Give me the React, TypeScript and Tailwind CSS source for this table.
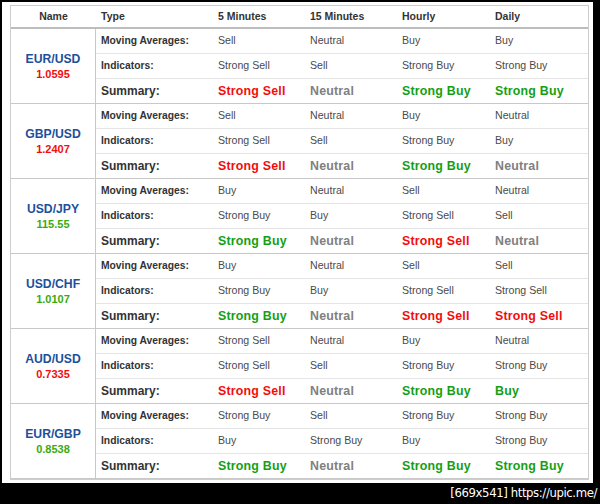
import React from 'react';

type Pair = {
  name: string;
  price: string;
  up: boolean;
  ma: string[];
  ind: string[];
  sum: string[];
};

const pairs: Pair[] = [
  {
    name: 'EUR/USD', price: '1.0595', up: false,
    ma: ['Sell', 'Neutral', 'Buy', 'Buy'],
    ind: ['Strong Sell', 'Sell', 'Strong Buy', 'Strong Buy'],
    sum: ['Strong Sell', 'Neutral', 'Strong Buy', 'Strong Buy'],
  },
  {
    name: 'GBP/USD', price: '1.2407', up: false,
    ma: ['Sell', 'Neutral', 'Buy', 'Neutral'],
    ind: ['Strong Sell', 'Sell', 'Strong Buy', 'Buy'],
    sum: ['Strong Sell', 'Neutral', 'Strong Buy', 'Neutral'],
  },
  {
    name: 'USD/JPY', price: '115.55', up: true,
    ma: ['Buy', 'Neutral', 'Sell', 'Neutral'],
    ind: ['Strong Buy', 'Buy', 'Strong Sell', 'Sell'],
    sum: ['Strong Buy', 'Neutral', 'Strong Sell', 'Neutral'],
  },
  {
    name: 'USD/CHF', price: '1.0107', up: true,
    ma: ['Buy', 'Neutral', 'Sell', 'Sell'],
    ind: ['Strong Buy', 'Buy', 'Strong Sell', 'Strong Sell'],
    sum: ['Strong Buy', 'Neutral', 'Strong Sell', 'Strong Sell'],
  },
  {
    name: 'AUD/USD', price: '0.7335', up: false,
    ma: ['Strong Sell', 'Neutral', 'Buy', 'Neutral'],
    ind: ['Strong Sell', 'Sell', 'Strong Buy', 'Strong Buy'],
    sum: ['Strong Sell', 'Neutral', 'Strong Buy', 'Buy'],
  },
  {
    name: 'EUR/GBP', price: '0.8538', up: true,
    ma: ['Strong Buy', 'Sell', 'Strong Buy', 'Strong Buy'],
    ind: ['Buy', 'Strong Buy', 'Buy', 'Strong Buy'],
    sum: ['Strong Buy', 'Neutral', 'Strong Buy', 'Strong Buy'],
  },
];

// column widths for the four timeframes
const colW = ['w-[92px]', 'w-[92px]', 'w-[93px]', 'flex-1'];

const sumColor = (v: string) => {
  if (v.includes('Sell')) return 'text-[#f20d0d]';
  if (v.includes('Buy')) return 'text-[#14a014]';
  return 'text-[#808080]';
};

const Row = ({ label, values, summary }: { label: string; values: string[]; summary?: boolean }) => (
  <div className={`flex items-center ${summary ? 'h-[24px]' : 'h-[25px] border-b border-[#e4e4e4]'}`}>
    <div className={`w-[117px] pl-[5px] font-bold text-[#333] ${summary ? 'text-[12px]' : 'text-[10.3px]'}`}>{label}</div>
    {values.map((v, i) => (
      <div
        key={i}
        className={`${colW[i]} pl-[5px] ${summary ? `text-[12.4px] font-bold tracking-[0.2px] ${sumColor(v)}` : 'text-[10.6px] text-[#4a4a4a]'}`}
      >
        {v}
      </div>
    ))}
  </div>
);

export default function App() {
  return (
    <div className="w-[600px] h-[504px] bg-black relative overflow-hidden" style={{ fontFamily: '"Liberation Sans", Arial, sans-serif' }}>
      <div className="ml-[2px] mt-[2px] w-[591px] h-[481px] bg-white pl-[8px] pt-[3px]">
        <div className="w-[579px] border border-[#cdcdcd]">
          {/* Header */}
          <div className="flex items-center h-[23px] border-b-2 border-[#bdbdbd] text-[10.5px] font-bold text-[#333]">
            <div className="w-[85px] text-center">Name</div>
            <div className="w-[117px] pl-[5px]">Type</div>
            <div className="w-[92px] pl-[5px]">5 Minutes</div>
            <div className="w-[92px] pl-[5px]">15 Minutes</div>
            <div className="w-[93px] pl-[5px]">Hourly</div>
            <div className="flex-1 pl-[5px]">Daily</div>
          </div>

          {pairs.map((p) => (
            <div key={p.name} className="flex border-b border-[#c9c9c9]">
              <div className="w-[85px] shrink-0 border-r border-[#c9c9c9] flex flex-col items-center justify-center pt-[1px]">
                <div className="text-[12.2px] font-bold text-[#1d4f9c] leading-[15px]">{p.name}</div>
                <div className={`text-[11px] font-bold leading-[15px] ${p.up ? 'text-[#3aab0f]' : 'text-[#f20d0d]'}`}>{p.price}</div>
              </div>
              <div className="flex-1">
                <Row label="Moving Averages:" values={p.ma} />
                <Row label="Indicators:" values={p.ind} />
                <Row label="Summary:" values={p.sum} summary />
              </div>
            </div>
          ))}
        </div>
      </div>
      <div
        className="absolute right-[3px] bottom-[2px] text-white text-[13px] leading-[18px] tracking-[-0.4px]"
        style={{ fontFamily: '"DejaVu Sans Condensed", "DejaVu Sans", sans-serif' }}
      >
        [669x541] https://upic.me/
      </div>
    </div>
  );
}
